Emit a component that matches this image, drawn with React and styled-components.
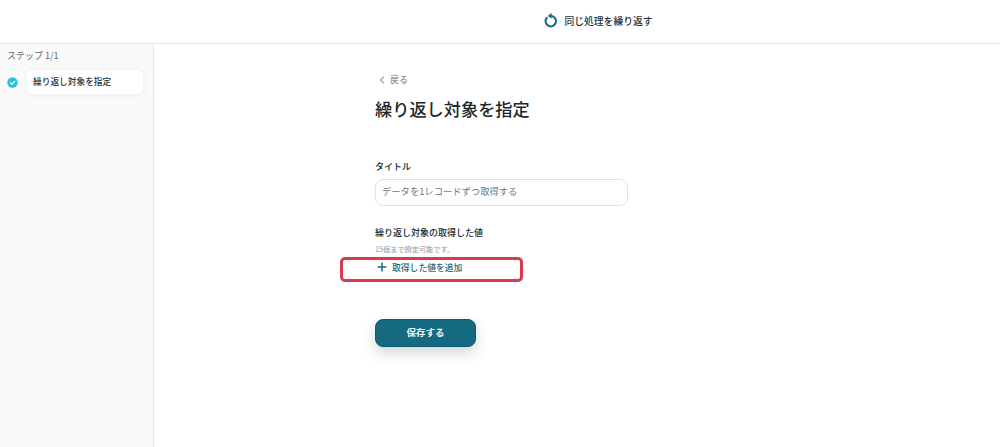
import React from "react";
import styled, { createGlobalStyle } from "styled-components";

const Global = createGlobalStyle`
  html, body { margin: 0; padding: 0; background: #fff; }
  body { font-family: "Noto Sans CJK JP", "Noto Sans", sans-serif; color: #283237; }
  * { box-sizing: border-box; }
`;

const Page = styled.div`
  width: 1000px;
  height: 447px;
  display: flex;
  flex-direction: column;
  overflow: hidden;
`;

const Header = styled.header`
  height: 44px;
  flex: none;
  border-bottom: 1px solid #e6e8ea;
  display: flex;
  align-items: center;
  justify-content: center;
  gap: 6px;
  padding-left: 197px;
  padding-bottom: 2px;
`;

const HeaderTitle = styled.span`
  font-size: 9.8px;
  font-weight: 500;
  color: #283237;
`;

const Body = styled.div`
  flex: 1;
  display: flex;
  min-height: 0;
`;

const Sidebar = styled.aside`
  width: 154px;
  flex: none;
  background: #fafafa;
  border-right: 1px solid #e6e8ea;
  padding: 5px 10px 0 7px;
`;

const StepCount = styled.div`
  font-size: 9px;
  line-height: 14px;
  color: #5c666c;
`;

const StepRow = styled.div`
  display: flex;
  align-items: center;
  gap: 8px;
  margin-top: 7px;
`;

const StepCard = styled.div`
  flex: 1;
  height: 24px;
  background: #fff;
  border-radius: 6px;
  box-shadow: 0 1px 6px rgba(40, 50, 55, 0.07);
  padding-left: 7px;
  font-size: 8.7px;
  font-weight: 500;
  line-height: 23px;
  color: #283237;
`;

const Main = styled.main`
  flex: 1;
  padding: 29px 0 0 221px;
`;

const Back = styled.div`
  display: flex;
  align-items: center;
  gap: 5px;
  margin-left: 4px;
  font-size: 9px;
  line-height: 14px;
  color: #6b7479;
`;

const Title = styled.h1`
  margin: 9px 0 0;
  font-size: 17.2px;
  line-height: 26px;
  font-weight: 500;
  color: #20282c;
`;

const FieldLabel = styled.div`
  font-size: 9px;
  line-height: 14px;
  font-weight: 500;
  color: #20282c;
  margin-top: ${p => p.$top}px;
`;

const TextBox = styled.div`
  width: 253px;
  height: 27px;
  margin-top: 5px;
  border: 1.5px solid #dde1e4;
  border-radius: 8px;
  background: #fff;
  padding-left: 6px;
  font-size: 9.3px;
  line-height: 23px;
  color: #6f787d;
`;

const Hint = styled.div`
  margin-top: 4px;
  font-size: 7.2px;
  line-height: 10px;
  color: #8f979b;
`;

const AddRow = styled.div`
  position: relative;
  display: flex;
  align-items: center;
  gap: 5px;
  height: 14px;
  margin-top: 6px;
  padding-left: 2px;
  font-size: 8.8px;
  font-weight: 500;
  color: #176a82;
`;

const Highlight = styled.div`
  position: absolute;
  left: -35px;
  top: -3px;
  width: 183px;
  height: 25px;
  border: 3px solid #dc3a4c;
  border-radius: 5px;
`;

const SaveButton = styled.button`
  display: block;
  width: 101px;
  height: 28px;
  margin-top: 45px;
  border: 1px solid #0f5a70;
  border-radius: 8px;
  background: #156980;
  box-shadow: 0 6px 14px rgba(40, 50, 55, 0.2);
  color: #eef5f7;
  font-family: inherit;
  font-size: 9.5px;
  font-weight: 700;
  padding: 0 0 2px;
`;

function RepeatIcon() {
  return (
    <svg width="14" height="15" viewBox="0 0 14 15" fill="none">
      <path d="M3.4 4.2 A5.2 5.2 0 1 0 7.2 3" stroke="#176a82" strokeWidth="2" />
      <path d="M7.6 0 L7.6 5.6 L3.6 2.9 Z" fill="#176a82" />
    </svg>
  );
}

function CheckBadge() {
  return (
    <svg width="11" height="11" viewBox="0 0 11 11" style={{ flex: "none" }}>
      <circle cx="5.5" cy="5.5" r="5.2" fill="#26c3dc" />
      <path d="M3 5.5 L4.9 7.3 L8 3.9" fill="none" stroke="#fff" strokeWidth="1.3" />
    </svg>
  );
}

function Chevron() {
  return (
    <svg width="6" height="8" viewBox="0 0 6 8" fill="none">
      <path d="M4.8 0.8 L1.4 4 L4.8 7.2" stroke="#555f64" strokeWidth="1" />
    </svg>
  );
}

function Plus() {
  return (
    <svg width="10" height="10" viewBox="0 0 10 10" fill="none">
      <path d="M5 0.6 V9.4 M0.6 5 H9.4" stroke="#176a82" strokeWidth="1.5" />
    </svg>
  );
}

export default function App() {
  return (
    <Page>
      <Global />
      <Header>
        <RepeatIcon />
        <HeaderTitle>同じ処理を繰り返す</HeaderTitle>
      </Header>
      <Body>
        <Sidebar>
          <StepCount>ステップ 1/1</StepCount>
          <StepRow>
            <CheckBadge />
            <StepCard>繰り返し対象を指定</StepCard>
          </StepRow>
        </Sidebar>
        <Main>
          <Back><Chevron />戻る</Back>
          <Title>繰り返し対象を指定</Title>
          <FieldLabel $top={38}>タイトル</FieldLabel>
          <TextBox>データを1レコードずつ取得する</TextBox>
          <FieldLabel $top={20}>繰り返し対象の取得した値</FieldLabel>
          <Hint>15個まで設定可能です。</Hint>
          <AddRow>
            <Highlight />
            <Plus />
            取得した値を追加
          </AddRow>
          <SaveButton>保存する</SaveButton>
        </Main>
      </Body>
    </Page>
  );
}
